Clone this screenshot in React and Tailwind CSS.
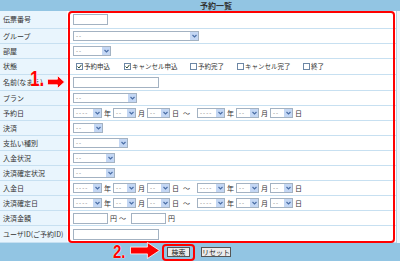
import React from 'react';

const rows = [
  { label: '伝票番号', h: 'h-[18px]', kind: 'input', w: 'w-[35px]' },
  { label: 'グループ', h: 'h-[15px]', kind: 'select', w: 'w-[126px]' },
  { label: '部屋', h: 'h-[15px]', kind: 'select', w: 'w-[38px]' },
  { label: '状態', h: 'h-[16px]', kind: 'checks' },
  { label: '名前(なまえ)', h: 'h-[16px]', kind: 'input', w: 'w-[86px]' },
  { label: 'プラン', h: 'h-[15px]', kind: 'select', w: 'w-[64px]' },
  { label: '予約日', h: 'h-[15px]', kind: 'date' },
  { label: '決済', h: 'h-[15px]', kind: 'select', w: 'w-[30px]' },
  { label: '支払い種別', h: 'h-[15px]', kind: 'select', w: 'w-[55px]' },
  { label: '入金状況', h: 'h-[15px]', kind: 'select', w: 'w-[42px]' },
  { label: '決済確定状況', h: 'h-[15px]', kind: 'select', w: 'w-[42px]' },
  { label: '入金日', h: 'h-[15px]', kind: 'date' },
  { label: '決済確定日', h: 'h-[15px]', kind: 'date' },
  { label: '決済金額', h: 'h-[15px]', kind: 'amount' },
  { label: 'ユーザID(ご予約ID)', h: 'h-[17px]', kind: 'input', w: 'w-[86px]' },
];

const checks = [
  { label: '予約申込', on: true, w: 'w-[48px]' },
  { label: 'キャンセル申込', on: true, w: 'w-[66px]' },
  { label: '予約完了', on: false, w: 'w-[47px]' },
  { label: 'キャンセル完了', on: false, w: 'w-[66px]' },
  { label: '終了', on: false, w: 'w-[30px]' },
];

function Box({ w }) {
  return <span className={`block h-[11px] shrink-0 border border-[#a3b2c2] bg-white ${w}`} />;
}

function Sel({ w, text = '--' }) {
  return (
    <span className={`flex h-[10px] shrink-0 items-center border border-[#a3b2c2] bg-white ${w}`}>
      <span className="flex-1 pl-[2px] text-[6px] leading-none tracking-[1px] text-[#777]">{text}</span>
      <span className="flex h-full w-[8px] items-center justify-center bg-[#c4d7f4]">
        <svg width="5" height="4" viewBox="0 0 5 4">
          <path d="M0.5 1 L2.5 3 L4.5 1" fill="none" stroke="#4b6ea6" strokeWidth="1.2" />
        </svg>
      </span>
    </span>
  );
}

function DateRange() {
  return (
    <div className="flex items-center gap-[2px] text-[7px] text-[#333]">
      <Sel w="w-[29px]" text="----" /><span className="w-[7px]">年</span>
      <Sel w="w-[23px]" /><span className="w-[7px]">月</span>
      <Sel w="w-[23px]" /><span className="w-[7px]">日</span>
      <span className="ml-[2px] w-[12px]">〜</span>
      <Sel w="w-[28px]" text="----" /><span className="w-[7px]">年</span>
      <Sel w="w-[23px]" /><span className="w-[7px]">月</span>
      <Sel w="w-[23px]" /><span className="w-[7px]">日</span>
    </div>
  );
}

function Cell({ row }) {
  if (row.kind === 'input') return <Box w={row.w} />;
  if (row.kind === 'select') return <Sel w={row.w} />;
  if (row.kind === 'date') return <DateRange />;
  if (row.kind === 'amount') {
    return (
      <div className="flex items-center gap-[2px] text-[7px] text-[#333]">
        <Box w="w-[35px]" /><span>円</span><span className="mr-[3px]">〜</span><Box w="w-[35px]" /><span>円</span>
      </div>
    );
  }
  return (
    <div className="ml-[3px] flex items-center text-[6.5px] text-[#333]">
      {checks.map(c => (
        <span key={c.label} className={`flex items-center gap-[1px] ${c.w}`}>
          <span className="flex h-[7px] w-[7px] shrink-0 items-center justify-center border border-[#6d87a5] bg-white">
            {c.on && (
              <svg width="5" height="5" viewBox="0 0 5 5">
                <path d="M0.5 2.5 L2 4 L4.5 0.8" fill="none" stroke="#2f4a2f" strokeWidth="1" />
              </svg>
            )}
          </span>
          <span className="whitespace-nowrap">{c.label}</span>
        </span>
      ))}
    </div>
  );
}

function Arrow({ className, width, height }) {
  const hx = width * 0.58;
  const t = height * 0.3;
  const b = height * 0.7;
  return (
    <svg className={className} width={width} height={height} viewBox={`0 0 ${width} ${height}`}>
      <polygon
        points={`0.5,${t} ${hx},${t} ${hx},0.5 ${width - 0.5},${height / 2} ${hx},${height - 0.5} ${hx},${b} 0.5,${b}`}
        fill="#ff0000"
        stroke="#ffffff"
        strokeWidth="0.8"
      />
    </svg>
  );
}

export default function App() {
  return (
    <div className="relative h-[261px] w-[400px] overflow-hidden bg-[#92c5e3] font-[family-name:'Noto_Sans_CJK_JP',sans-serif]">
      <div className="flex h-[11px] items-center pl-[200px] text-[8px] font-bold leading-none text-[#333]">予約一覧</div>

      <div className="flex">
        <div className="flex-1">
          {rows.map(r => (
            <div key={r.label} className={`flex border-b border-[#c7e0f1] ${r.h}`}>
              <div className="flex w-[67px] shrink-0 items-center whitespace-nowrap bg-[#e9f5fd] pl-[3px] text-[7px] text-[#333]">{r.label}</div>
              <div className="flex flex-1 items-center border-l border-white bg-white pl-[5px]">
                <Cell row={r} />
              </div>
            </div>
          ))}
        </div>
        <div className="w-[4px] border-l border-[#b9d0e0] bg-[#eef6fb]" />
      </div>

      <div className="flex h-[18px] items-center pl-[162px]">
        <div className="flex h-[17px] w-[33px] items-center justify-center rounded-[4px] border-2 border-[#ff0000]">
          <span className="flex h-[10px] w-[23px] items-center justify-center border border-[#555] bg-[#ececec] text-[7px] leading-none text-[#222]">検索</span>
        </div>
        <span className="ml-[6px] flex h-[10px] w-[30px] items-center justify-center border border-[#555] bg-[#ececec] text-[7px] leading-none text-[#222]">リセット</span>
      </div>

      {/* annotations */}
      <div className="absolute left-[68px] top-[11px] h-[232px] w-[327px] rounded-[4px] border-2 border-[#ff0000]" />

      <span className="absolute left-[30px] top-[68px] origin-top scale-y-125 font-[family-name:'Liberation_Sans',sans-serif] text-[17px] font-bold leading-none text-[#ff0000] [text-shadow:0_0_1px_#fff,0_0_1px_#fff]">1.</span>
      <Arrow className="absolute left-[47px] top-[75px]" width={18} height={14} />

      <span className="absolute left-[113px] top-[242px] origin-top scale-y-125 font-[family-name:'Liberation_Sans',sans-serif] text-[15px] font-bold leading-none text-[#ff0000] [text-shadow:0_0_1px_#fff,0_0_1px_#fff]">2.</span>
      <Arrow className="absolute left-[130px] top-[242px]" width={30} height={17} />
    </div>
  );
}
